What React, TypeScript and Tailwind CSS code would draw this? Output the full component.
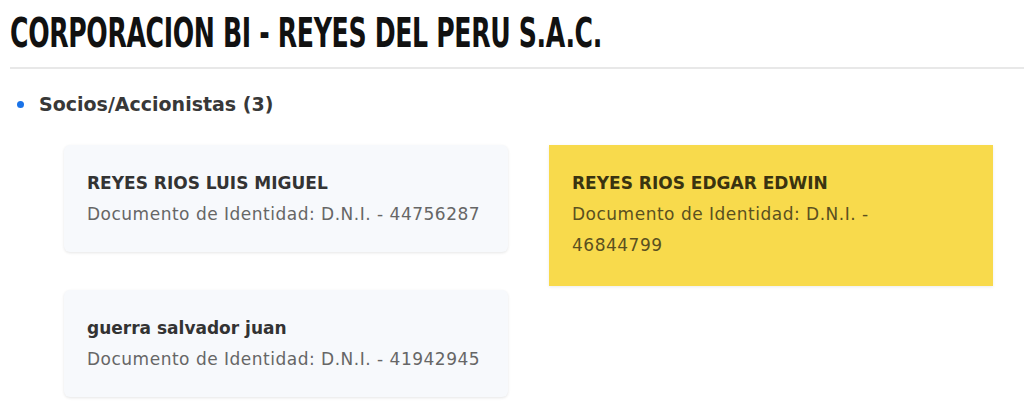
import React from 'react';

interface Socio {
  nombre: string;
  documento: string;
  destacado?: boolean;
}

const socios: Socio[] = [
  { nombre: 'REYES RIOS LUIS MIGUEL', documento: 'Documento de Identidad: D.N.I. - 44756287' },
  { nombre: 'REYES RIOS EDGAR EDWIN', documento: 'Documento de Identidad: D.N.I. - 46844799', destacado: true },
  { nombre: 'guerra salvador juan', documento: 'Documento de Identidad: D.N.I. - 41942945' },
];

export default function App() {
  return (
    <div className="h-[418px] w-[1024px] overflow-hidden bg-white font-['DejaVu_Sans',sans-serif]">
      {/* Title */}
      <div className="ml-[10px] border-b-2 border-[#e8e8e8] pt-[12px] pb-[13px]">
        <h1 className="inline-block origin-left scale-x-[0.70] font-['DejaVu_Sans_Condensed',sans-serif] text-[40px] leading-[42px] font-bold tracking-[-0.5px] whitespace-nowrap text-[#111]">
          CORPORACION BI - REYES DEL PERU S.A.C.
        </h1>
      </div>

      {/* Section */}
      <div className="mt-[21px] flex items-center gap-[15px] pl-[17px]">
        <span className="h-[7px] w-[7px] rounded-full bg-[#1a73e8]" />
        <h2 className="text-[19px] leading-[28px] font-semibold text-[#383838]">
          Socios/Accionistas (3)
        </h2>
      </div>

      <div className="mt-[27px] ml-[64px] grid w-[929px] grid-cols-2 items-start gap-x-[41px] gap-y-[4px]">
        {socios.map((s) => (
          <div
            key={s.documento}
            className={
              s.destacado
                ? 'bg-[#f8da4c] pt-[23px] pr-[40px] pb-[25px] pl-[23px] shadow-[0_1px_3px_rgba(0,0,0,0.08)]'
                : 'rounded-md bg-[#f7f9fc] px-[23px] pt-[23px] pb-[22px] shadow-[0_1px_3px_rgba(0,0,0,0.1)]'
            }
          >
            <p className={`text-[17px] leading-[31px] font-semibold ${s.destacado ? 'text-[#3a3310]' : 'text-[#333]'}`}>
              {s.nombre}
            </p>
            <p className={`text-[17px] leading-[31px] tracking-[0.5px] ${s.destacado ? 'text-[#5a5020]' : 'text-[#666]'}`}>
              {s.documento}
            </p>
          </div>
        ))}
      </div>
    </div>
  );
}
